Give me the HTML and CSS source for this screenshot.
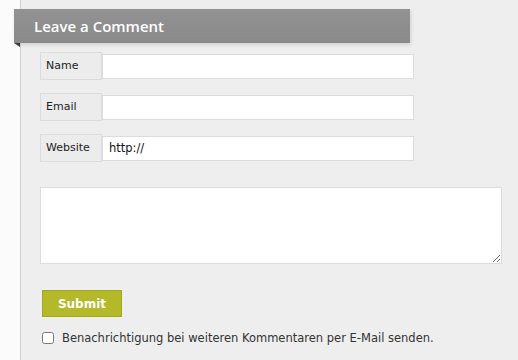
FILE: index.html
```html
<!DOCTYPE html>
<html>
<head>
<meta charset="utf-8">
<link rel="stylesheet" href="styles.css">
</head>
<body>
<div class="page">
  <div class="gutter"></div>
  <main class="main">
    <h3 class="ribbon">Leave a Comment</h3>
    <form class="form">
      <div class="row">
        <label class="lbl" for="name">Name</label>
        <input class="inp" id="name" type="text">
      </div>
      <div class="row">
        <label class="lbl" for="email">Email</label>
        <input class="inp" id="email" type="text">
      </div>
      <div class="row">
        <label class="lbl" for="url">Website</label>
        <input class="inp" id="url" type="text" value="http://">
      </div>
      <textarea class="msg"></textarea>
      <button class="submit" type="button">Submit</button>
      <label class="notify"><input type="checkbox" class="cb"><span>Benachrichtigung bei weiteren Kommentaren per E-Mail senden.</span></label>
    </form>
  </main>
</div>
</body>
</html>
```
FILE: styles.css
```css
html, body {
  margin: 0;
  padding: 0;
  height: 100%;
  background: #ffffff;
}
.page {
  display: flex;
  min-height: 360px;
  font-family: "DejaVu Sans", sans-serif;
  color: #222;
}
.gutter {
  width: 20px;
  flex: none;
  border-right: 1px solid #cfcfcf;
  background: #fbfbfb;
}
.main {
  flex: 1;
  background: #eeeeee;
  padding: 9px 0 0 19px;
}
.ribbon {
  position: relative;
  margin: 0 0 0 -26px;
  width: 376px;
  height: 34px;
  padding: 0 0 0 20px;
  box-sizing: content-box;
  background: linear-gradient(#929292, #8a8a8a);
  box-shadow: 1px 2px 4px rgba(0,0,0,0.12);
  color: #fff;
  font-family: "Open Sans", sans-serif;
  font-size: 15px;
  font-weight: 600;
  line-height: 34px;
}
.ribbon::after {
  content: "";
  position: absolute;
  left: 0;
  top: 34px;
  width: 0;
  height: 0;
  border-top: 4px solid #3a3a3a;
  border-left: 6px solid transparent;
}
.form {
  display: flex;
  flex-direction: column;
  align-items: flex-start;
  padding-top: 9px;
}
.row {
  display: flex;
  align-items: center;
  height: 28px;
  margin-bottom: 13px;
}
.lbl {
  box-sizing: border-box;
  width: 62px;
  height: 28px;
  border: 1px solid #dcdcdc;
  background: #ececec;
  font-size: 11px;
  line-height: 26px;
  padding-left: 5px;
  color: #222;
}
.inp {
  box-sizing: border-box;
  width: 312px;
  height: 25px;
  margin: 0;
  border: 1px solid #dcdcdc;
  background: #fff;
  font-family: "DejaVu Sans", sans-serif;
  font-size: 11.5px;
  padding: 0 6px;
  color: #111;
  outline: none;
}
.msg {
  box-sizing: border-box;
  width: 462px;
  height: 77px;
  margin: 12px 0 0 0;
  border: 1px solid #dcdcdc;
  background: #fff;
  resize: both;
}
.submit {
  margin: 26px 0 0 2px;
  width: 80px;
  height: 27px;
  border: 1px solid #a3a81c;
  background: #b4b92a;
  color: #fff;
  font-family: "DejaVu Sans", sans-serif;
  font-weight: bold;
  font-size: 12px;
  padding: 0;
}
.notify {
  display: flex;
  align-items: center;
  margin: 14px 0 0 2px;
  font-size: 11.5px;
  color: #333;
}
.cb {
  width: 12px;
  height: 12px;
  margin: 0 8px 0 0;
}
```
